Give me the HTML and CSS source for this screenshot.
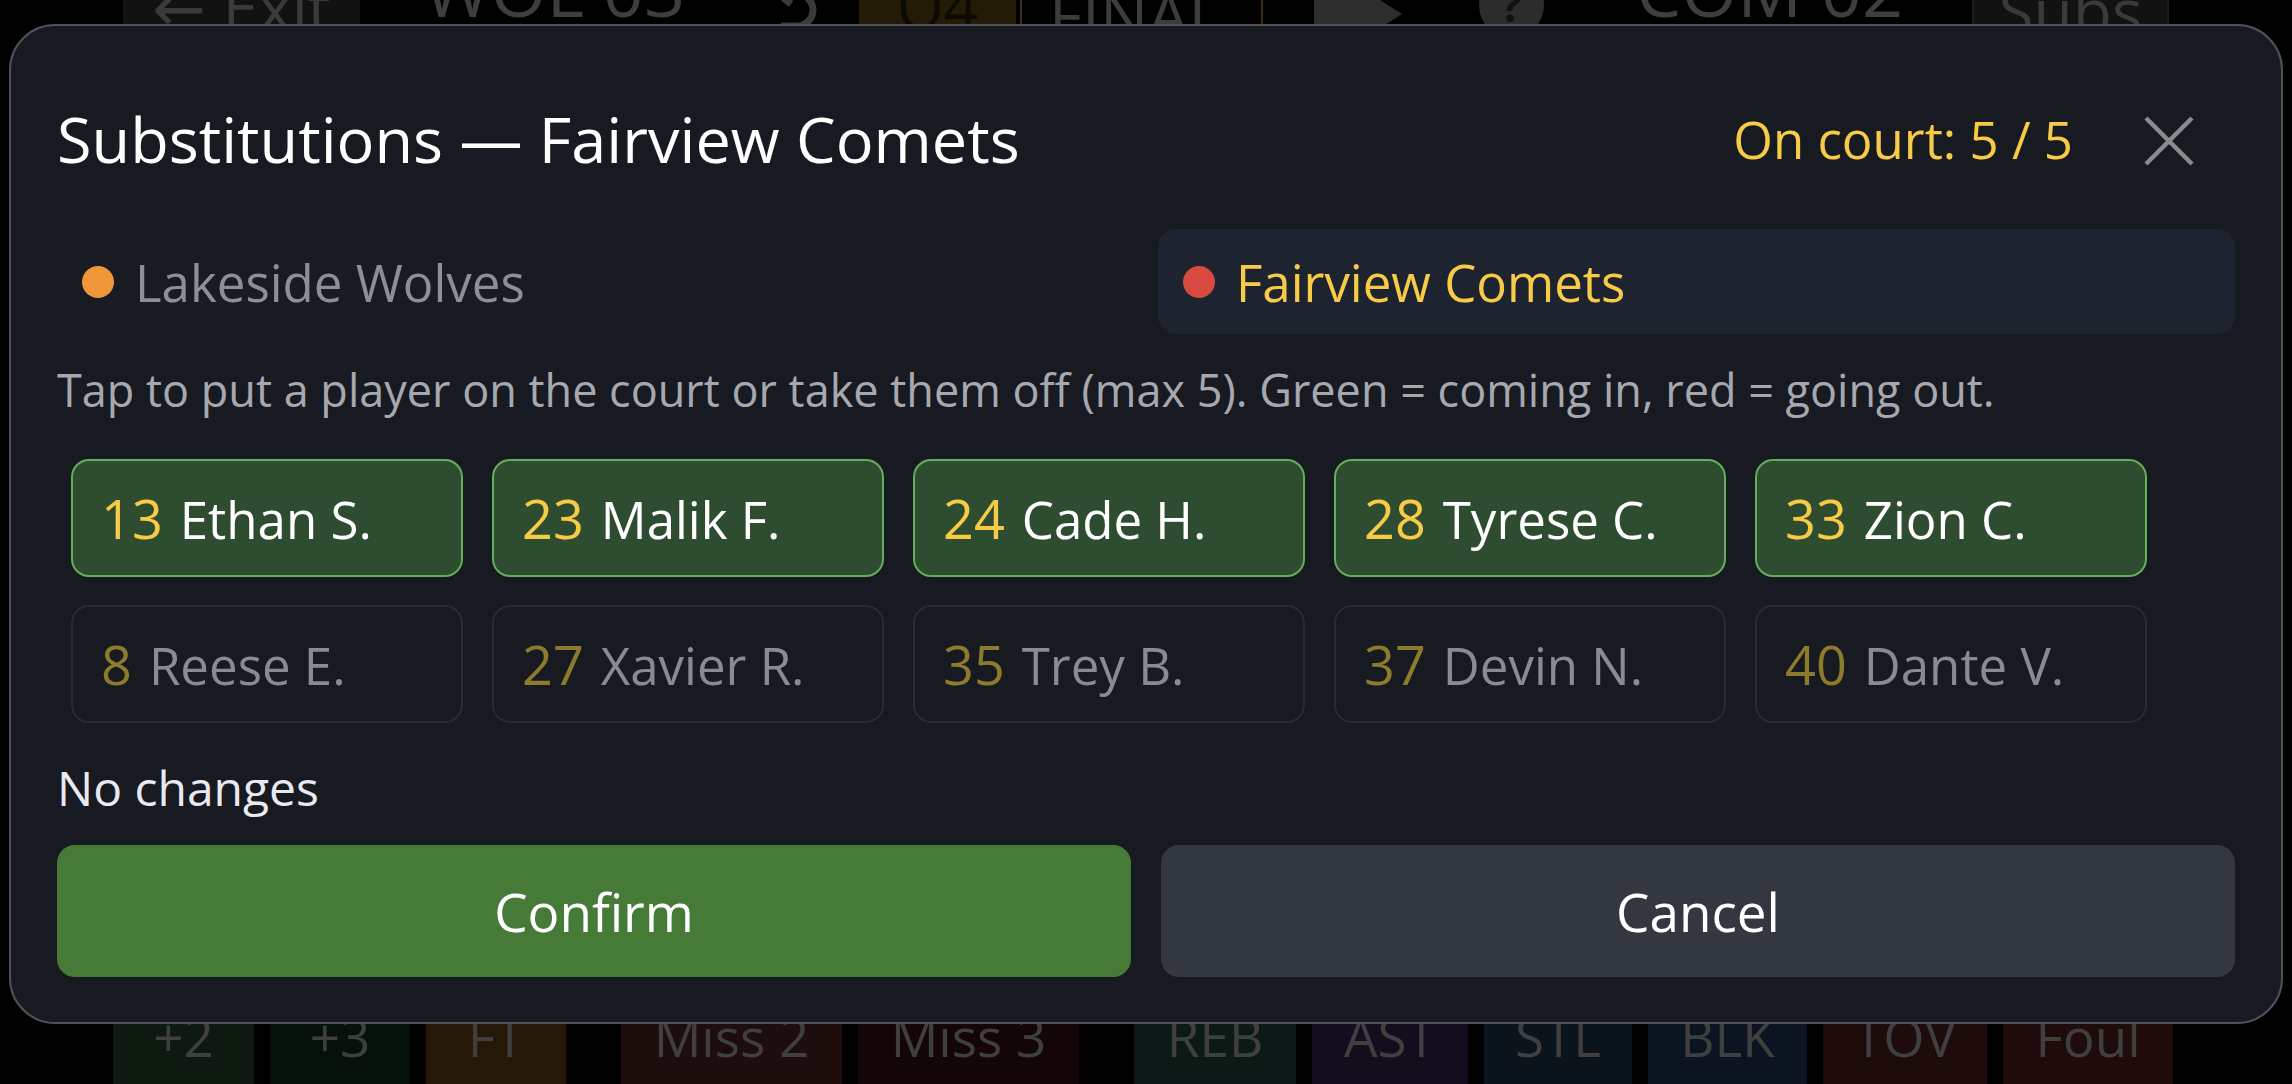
FILE: index.html
```html
<!DOCTYPE html>
<html lang="en">
<head>
<meta charset="utf-8">
<title>Substitutions</title>
<link rel="stylesheet" href="styles.css">
</head>
<body>
<div class="app">
  <header class="topbar">
    <div class="tb-btn exit">← Exit</div>
    <div class="score score-home">
      <div class="score-main">WOL 03</div>
      <div class="score-sub">FLS 5 TOL 5</div>
    </div>
    <svg class="undo" width="55" height="60" viewBox="0 -20 55 60" aria-hidden="true">
      <path d="M16 -6 H30 A16 16 0 0 1 30 26 H14" fill="none" stroke="#3a3a3a" stroke-width="7"/>
      <path d="M24 -16 L12 -6 L24 4" fill="none" stroke="#3a3a3a" stroke-width="7"/>
    </svg>
    <div class="quarter">Q4</div>
    <div class="final">FINAL</div>
    <svg class="tag" width="88" height="64" viewBox="0 0 88 64" aria-hidden="true">
      <path d="M0 0 H66 L88 14 L66 28 H40 L22 64 L0 64 Z" fill="#2e2e2e"/>
    </svg>
    <div class="help">?</div>
    <div class="score score-away">
      <div class="score-main">COM 02</div>
      <div class="score-sub">FLS 2 TOL 5</div>
    </div>
    <div class="tb-btn subs">Subs</div>
  </header>
  <main class="court"></main>
  <footer class="actionbar">
    <div class="act a-2">+2</div>
    <div class="act a-3">+3</div>
    <div class="act a-ft">FT</div>
    <div class="act a-m2 grp">Miss 2</div>
    <div class="act a-m3">Miss 3</div>
    <div class="act a-reb grp">REB</div>
    <div class="act a-ast">AST</div>
    <div class="act a-stl">STL</div>
    <div class="act a-blk">BLK</div>
    <div class="act a-tov">TOV</div>
    <div class="act a-foul">Foul</div>
  </footer>
</div>

<div class="backdrop">
  <section class="modal" role="dialog" aria-label="Substitutions">
    <div class="modal-head">
      <h2 class="title">Substitutions — Fairview Comets</h2>
      <div class="head-right">
        <span class="count">On court: 5 / 5</span>
        <button class="close" aria-label="Close">
          <svg width="50" height="50" viewBox="0 0 50 50" aria-hidden="true">
            <path d="M2 2 L48 48 M48 2 L2 48" stroke="#8b8b8b" stroke-width="4.5" fill="none"/>
          </svg>
        </button>
      </div>
    </div>

    <div class="tabs">
      <button class="tab"><span class="dot dot-orange"></span>Lakeside Wolves</button>
      <button class="tab active"><span class="dot dot-red"></span>Fairview Comets</button>
    </div>

    <p class="hint">Tap to put a player on the court or take them off (max 5). Green = coming in, red = going out.</p>

    <div class="roster">
      <button class="player on"><span class="label"><span class="num">13</span><span class="name">Ethan S.</span></span></button>
      <button class="player on"><span class="label"><span class="num">23</span><span class="name">Malik F.</span></span></button>
      <button class="player on"><span class="label"><span class="num">24</span><span class="name">Cade H.</span></span></button>
      <button class="player on"><span class="label"><span class="num">28</span><span class="name">Tyrese C.</span></span></button>
      <button class="player on"><span class="label"><span class="num">33</span><span class="name">Zion C.</span></span></button>
      <button class="player"><span class="label"><span class="num">8</span><span class="name">Reese E.</span></span></button>
      <button class="player"><span class="label"><span class="num">27</span><span class="name">Xavier R.</span></span></button>
      <button class="player"><span class="label"><span class="num">35</span><span class="name">Trey B.</span></span></button>
      <button class="player"><span class="label"><span class="num">37</span><span class="name">Devin N.</span></span></button>
      <button class="player"><span class="label"><span class="num">40</span><span class="name">Dante V.</span></span></button>
    </div>

    <p class="status">No changes</p>

    <div class="actions">
      <button class="btn confirm">Confirm</button>
      <button class="btn cancel">Cancel</button>
    </div>
  </section>
</div>
</body>
</html>
```

FILE: styles.css
```css
* { box-sizing: border-box; margin: 0; padding: 0; }

html, body {
  width: 2292px;
  height: 1084px;
  overflow: hidden;
  background: #000;
}

body {
  font-family: "Open Sans", "Noto Sans", "DejaVu Sans", sans-serif;
  color: #fff;
}

button {
  font-family: inherit;
  border: 0;
  background: none;
  color: inherit;
  cursor: pointer;
}

/* ---------- underlying (dimmed) scoreboard ---------- */
.app {
  height: 1084px;
  display: flex;
  flex-direction: column;
}

.topbar {
  flex: none;
  height: 130px;
  margin-top: -60px;
  display: flex;
  align-items: center;
  padding-left: 123px;
  color: #3b3b3b;
}

.tb-btn {
  height: 130px;
  border-radius: 24px;
  background: #121212;
  color: #3a3a3a;
  font-size: 64px;
  line-height: 1;
  display: flex;
  align-items: center;
  justify-content: center;
  white-space: nowrap;
}

.exit { width: 237px; padding-top: 4px; }

.score {
  align-self: flex-start;
  margin-top: 13px;
  color: #3e3e3e;
  white-space: nowrap;
}
.score-main { font-size: 72px; line-height: 72px; }
.score-sub {
  margin-top: 25px;
  font-size: 39px;
  line-height: 44px;
  color: #2a2a2a;
  padding-left: 2px;
}
.score-home { width: 267px; margin-left: 64px; }
.score-away { width: 274px; margin-left: 92px; }

.undo {
  align-self: flex-start;
  margin-top: 40px;
  margin-left: 76px;
}

.quarter {
  width: 157px;
  height: 127px;
  margin-left: 37px;
  align-self: flex-start;
  border-radius: 22px;
  background: #241b06;
  color: #0d0a02;
  font-size: 60px;
  display: flex;
  align-items: center;
  justify-content: center;
  padding-top: 4px;
}

.final {
  width: 243px;
  height: 130px;
  margin-left: 4px;
  border: 2px solid #3b300d;
  border-radius: 22px;
  font-size: 64px;
  color: #3c3c3c;
  display: flex;
  align-items: center;
  padding-left: 27px;
  padding-top: 18px;
}

.tag {
  align-self: flex-start;
  margin-top: 60px;
  margin-left: 51px;
}

.help {
  width: 65px;
  height: 66px;
  margin-left: 77px;
  align-self: flex-start;
  margin-top: 32px;
  border-radius: 50%;
  background: #2c2c2c;
  color: #111;
  font-size: 44px;
  font-weight: 700;
  line-height: 66px;
  text-align: center;
}

.subs {
  width: 197px;
  margin-left: 62px;
  border: 2px solid #1c1c1c;
  padding-top: 12px;
}

.court { flex: 1; }

.actionbar {
  flex: none;
  height: 96px;
  display: flex;
  gap: 16px;
  padding-left: 113px;
}

.act {
  color: #3f3f3f;
  font-size: 53px;
  display: flex;
  align-items: center;
  justify-content: center;
}
.act.grp { margin-left: 39px; }
.a-2   { width: 141px; background: #0e1910; }
.a-3   { width: 140px; background: #06110a; }
.a-ft  { width: 140px; background: #261809; }
.a-m2  { width: 221px; background: #1e0d0d; }
.a-m3  { width: 221px; background: #140606; }
.a-reb { width: 162px; background: #0c1916; }
.a-ast { width: 156px; background: #140d1e; }
.a-stl { width: 148px; background: #0b131b; }
.a-blk { width: 159px; background: #0b1420; }
.a-tov { width: 164px; background: #1e0c0a; }
.a-foul{ width: 170px; background: #1f0c0a; }

/* ---------- modal ---------- */
.backdrop {
  position: fixed;
  inset: 0;
  display: flex;
  justify-content: center;
  align-items: flex-start;
  padding-top: 24px;
}

.modal {
  width: 2274px;
  background: #171a21;
  border: 2px solid #4f5256;
  border-radius: 46px;
  padding: 49px 46px 45px;
}

.modal-head {
  height: 132px;
  display: flex;
  align-items: center;
  justify-content: space-between;
}

.title {
  font-size: 63px;
  font-weight: 400;
  line-height: 76px;
  color: #fff;
  margin-bottom: 5px;
  white-space: nowrap;
}

.head-right {
  display: flex;
  align-items: center;
  gap: 30px;
}

.count {
  font-size: 51px;
  line-height: 64px;
  color: #f7cb46;
  margin-bottom: 4px;
}

.close {
  width: 132px;
  height: 132px;
  display: flex;
  align-items: center;
  justify-content: center;
}
.close svg { display: block; }

.tabs {
  margin-top: 22px;
  display: grid;
  grid-template-columns: 1fr 1fr;
  gap: 24px;
}

.tab {
  height: 105px;
  border-radius: 18px;
  background: #181b22;
  display: flex;
  align-items: center;
  gap: 21px;
  padding-left: 25px;
  font-size: 51px;
  color: #8b8f99;
  text-align: left;
}

.tab.active {
  background: #1e2330;
  color: #f7cb46;
}

.dot {
  width: 32px;
  height: 32px;
  border-radius: 50%;
  flex: none;
}
.dot-orange { background: #ee9638; }
.dot-red { background: #d84a40; }

.hint {
  margin-top: 25px;
  font-size: 45px;
  line-height: 61px;
  color: #a6a8ae;
  white-space: nowrap;
}

.roster {
  margin-top: 26px;
  padding: 13px 14px;
  display: flex;
  flex-wrap: wrap;
  column-gap: 29.5px;
  row-gap: 28px;
}

.player {
  width: 391.5px;
  height: 118px;
  border: 2px solid #272b33;
  border-radius: 18px;
  padding: 0 28px;
  display: flex;
  align-items: center;
  text-align: left;
  white-space: nowrap;
}

.label { line-height: 1; font-size: 54px; }

.player .num { color: #8c7b2d; font-size: 54px; margin-right: 17px; }
.player .name { color: #8a8b90; font-size: 51px; }

.player.on {
  background: #2e4c30;
  border-color: #63ae58;
}
.player.on .num { color: #f7cb46; }
.player.on .name { color: #ffffff; }

.status {
  margin-top: 19px;
  font-size: 48px;
  line-height: 65px;
  color: #e8eaf0;
}

.actions {
  margin-top: 25px;
  display: grid;
  grid-template-columns: 1fr 1fr;
  gap: 30px;
}

.btn {
  height: 132px;
  border-radius: 18px;
  font-size: 53px;
  color: #fff;
}
.confirm { background: #467a37; }
.cancel { background: #33373f; }
```
